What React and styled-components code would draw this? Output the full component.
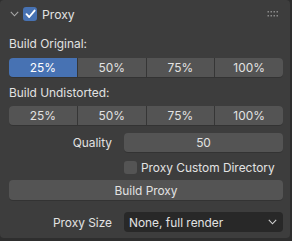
import React from 'react';
import styled, { createGlobalStyle } from 'styled-components';

const Global = createGlobalStyle`
  html, body {
    margin: 0;
    padding: 0;
    background: #2e2e2e;
  }
  body {
    font-family: Inter, "DejaVu Sans", sans-serif;
    font-size: 11.9px;
    color: #e2e2e2;
  }
`;

const Panel = styled.div`
  width: 290px;
  height: 238px;
  box-sizing: border-box;
  background: #3d3d3d;
  border-radius: 4px;
  padding: 0 7px 0 9px;
  display: flex;
  flex-direction: column;
`;

const Header = styled.div`
  height: 28px;
  display: flex;
  align-items: center;
  margin-left: 1px;
  gap: 4px;
`;

const Title = styled.span`
  font-size: 12.2px;
  margin-left: 1px;
  flex: 1;
`;

const Label = styled.div`
  height: 18px;
  line-height: 18px;
  margin-top: ${(p) => p.$mt || 0}px;
`;

const Segmented = styled.div`
  display: grid;
  grid-template-columns: repeat(4, 1fr);
  gap: 1px;
  background: #363636;
  border-radius: 4px;
  overflow: hidden;
  height: 19px;
  margin-top: ${(p) => p.$mt || 0}px;
  box-shadow: 0 1px 0 rgba(0, 0, 0, 0.15);
`;

const Seg = styled.div`
  background: ${(p) => (p.$active ? '#4772b3' : '#545454')};
  color: ${(p) => (p.$active ? '#ffffff' : '#e2e2e2')};
  display: flex;
  align-items: center;
  justify-content: center;
`;

const PropRow = styled.div`
  display: grid;
  grid-template-columns: 103px 1fr;
  column-gap: 12px;
  align-items: center;
  height: ${(p) => p.$h || 19}px;
  margin-top: ${(p) => p.$mt || 0}px;
`;

const PropLabel = styled.div`
  text-align: right;
`;

const Field = styled.div`
  height: 100%;
  background: #545454;
  border-radius: 4px;
  display: flex;
  align-items: center;
  justify-content: center;
  box-shadow: 0 1px 0 rgba(0, 0, 0, 0.15);
`;

const CheckWrap = styled.label`
  grid-column: 2;
  display: flex;
  align-items: center;
  gap: 4px;
`;

const Box = styled.span`
  width: 13px;
  height: 13px;
  border-radius: 3px;
  background: ${(p) => (p.$checked ? '#4772b3' : '#545454')};
  display: inline-flex;
  align-items: center;
  justify-content: center;
`;

const HeaderBox = styled(Box)`
  width: 14px;
  height: 14px;
`;

const Button = styled.div`
  height: 20px;
  margin-top: 4px;
  background: #545454;
  border-radius: 4px;
  display: flex;
  align-items: center;
  justify-content: center;
  box-shadow: 0 1px 0 rgba(0, 0, 0, 0.15);
`;

const Select = styled.div`
  height: 100%;
  background: #282828;
  border-radius: 4px;
  display: flex;
  align-items: center;
  justify-content: space-between;
  padding: 0 6px 0 5px;
`;

const GripSlot = styled.span`
  display: flex;
  margin-right: 4px;
`;

const Grip = () => (
  <svg width="12" height="6" viewBox="0 0 12 6">
    {[0, 3, 6, 9].map((x) =>
      [0, 4].map((y) => (
        <rect key={`${x}-${y}`} x={x + 0.5} y={y} width="1.5" height="1.5" fill="#8a8a8a" />
      ))
    )}
  </svg>
);

const Chevron = ({ color = '#a8a8a8' }) => (
  <svg width="9" height="6" viewBox="0 0 9 6">
    <path d="M0.8 0.8 L4.5 4.8 L8.2 0.8" stroke={color} strokeWidth="1.1" fill="none" />
  </svg>
);

const Tick = () => (
  <svg width="11" height="10" viewBox="0 0 11 10">
    <path d="M1.5 5.2 L4.2 8 L9.6 1.6" stroke="#fff" strokeWidth="1.9" fill="none" strokeLinecap="round" strokeLinejoin="round" />
  </svg>
);

const levels = ['25%', '50%', '75%', '100%'];

export default function App() {
  return (
    <>
      <Global />
      <Panel>
        <Header>
          <Chevron />
          <HeaderBox $checked>
            <Tick />
          </HeaderBox>
          <Title>Proxy</Title>
          <GripSlot>
            <Grip />
          </GripSlot>
        </Header>

        <Label $mt={7}>Build Original:</Label>
        <Segmented $mt={5}>
          {levels.map((l, i) => (
            <Seg key={l} $active={i === 0}>{l}</Seg>
          ))}
        </Segmented>

        <Label $mt={7}>Build Undistorted:</Label>
        <Segmented $mt={4}>
          {levels.map((l) => (
            <Seg key={l}>{l}</Seg>
          ))}
        </Segmented>

        <PropRow $mt={8}>
          <PropLabel>Quality</PropLabel>
          <Field>50</Field>
        </PropRow>

        <PropRow $mt={6} $h={18}>
          <CheckWrap>
            <Box />
            <span>Proxy Custom Directory</span>
          </CheckWrap>
        </PropRow>

        <Button>Build Proxy</Button>

        <PropRow $mt={12} $h={20}>
          <PropLabel>Proxy Size</PropLabel>
          <Select>
            <span>None, full render</span>
            <Chevron color="#d0d0d0" />
          </Select>
        </PropRow>
      </Panel>
    </>
  );
}
